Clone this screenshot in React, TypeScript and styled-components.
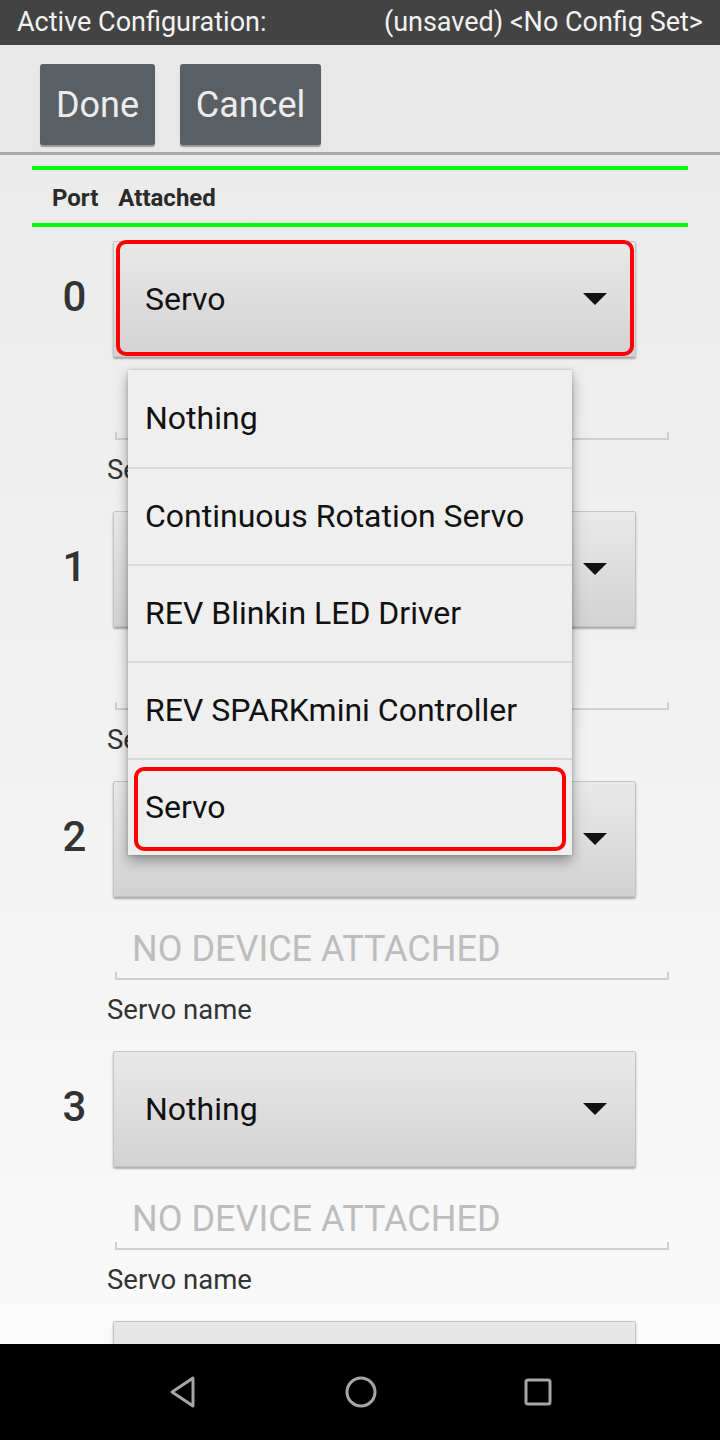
import React from "react";
import styled, { createGlobalStyle } from "styled-components";

const Global = createGlobalStyle`
  html, body { margin: 0; padding: 0; }
  body { font-family: Roboto, "Noto Sans", sans-serif; background: #000; }
  * { box-sizing: border-box; }
`;

const Page = styled.div`
  width: 720px;
  height: 1440px;
  display: flex;
  flex-direction: column;
  overflow: hidden;
`;

const TopBar = styled.div`
  height: 45px;
  flex: none;
  background: #434343;
  color: #f2f2f2;
  font-size: 27px;
  display: flex;
  align-items: center;
  justify-content: space-between;
  padding: 0 17px 2px 17px;
`;

const Toolbar = styled.div`
  height: 107px;
  flex: none;
  background: #e8e8e8;
  display: flex;
  gap: 25px;
  padding: 19px 0 0 40px;
  align-items: flex-start;
`;

const ToolButton = styled.button<{ $w: number }>`
  width: ${(p) => p.$w}px;
  height: 81px;
  border: none;
  border-radius: 3px;
  background: #5a5f64;
  box-shadow: 0 2px 1px rgba(0, 0, 0, 0.35);
  color: #ececec;
  font-family: Roboto, sans-serif;
  font-size: 36px;
  padding: 0;
`;

const Rule = styled.div`
  height: 3px;
  flex: none;
  background: #a9a9a9;
`;

const Content = styled.div`
  flex: 1;
  position: relative;
  overflow: hidden;
  background: linear-gradient(#ebebeb 0%, #f2f2f2 50%, #fafafa 100%);
  padding: 11px 32px 0 32px;
`;

const GreenLine = styled.div`
  height: 4px;
  background: #00ff00;
`;

const HeaderRow = styled.div`
  height: 53px;
  display: flex;
  align-items: center;
  gap: 20px;
  padding: 2px 0 0 20px;
  font-size: 24px;
  font-weight: 700;
  color: #2a2a2a;
`;

const Rows = styled.div`
  display: flex;
  flex-direction: column;
  gap: 27px;
  margin: 14px 0 0 -32px;
`;

const Row = styled.div`
  display: grid;
  grid-template-columns: 113px 1fr;
`;

const PortNum = styled.div`
  height: 116px;
  display: flex;
  align-items: center;
  justify-content: center;
  padding: 0 0 6px 36px;
  font-size: 42px;
  font-weight: 500;
  color: #333;
`;

const Body = styled.div`
  display: flex;
  flex-direction: column;
`;

const Spinner = styled.div<{ $selected?: boolean }>`
  position: relative;
  width: 523px;
  height: 116px;
  border: 1px solid #c4c4c4;
  border-radius: 2px;
  background: linear-gradient(#e9e9e9, #d2d2d2);
  box-shadow: 0 2px 2px rgba(0, 0, 0, 0.3);
  display: flex;
  align-items: center;
  justify-content: space-between;
  padding: 0 28px 0 31px;
  font-size: 32px;
  color: #111;
  &::after {
    content: "";
    display: ${(p) => (p.$selected ? "block" : "none")};
    position: absolute;
    top: -2px;
    left: 2px;
    right: 1px;
    bottom: 0px;
    border: 4px solid #ff0000;
    border-radius: 10px;
  }
`;

const Arrow = styled.div`
  width: 0;
  height: 0;
  border-left: 12px solid transparent;
  border-right: 12px solid transparent;
  border-top: 12px solid #111;
`;

const FieldText = styled.div`
  margin: 33px 0 0 2px;
  padding: 0 0 4px 17px;
  font-size: 36px;
  line-height: 38px;
  color: #bdbdbd;
`;

const Underline = styled.div`
  margin-left: 2px;
  width: 554px;
  height: 8px;
  border: 2px solid #cfcfcf;
  border-top: none;
`;

const FieldLabel = styled.div`
  margin: 16px 0 0 -6px;
  font-size: 27.5px;
  line-height: 28px;
  color: #333;
`;

const Popup = styled.div`
  position: absolute;
  left: 128px;
  top: 215px;
  width: 444px;
  background: #efefef;
  box-shadow: 0 6px 12px rgba(0, 0, 0, 0.35), 0 0 3px rgba(0, 0, 0, 0.2);
  display: flex;
  flex-direction: column;
`;

const PopupItem = styled.div<{ $highlight?: boolean }>`
  position: relative;
  height: 97px;
  display: flex;
  align-items: center;
  padding: 0 0 2px 17px;
  font-size: 32px;
  color: #111;
  & + & {
    border-top: 2px solid #d9d9d9;
  }
  &::after {
    content: "";
    display: ${(p) => (p.$highlight ? "block" : "none")};
    position: absolute;
    top: 7px;
    left: 6px;
    right: 6px;
    bottom: 4px;
    border: 4px solid #ff0000;
    border-radius: 10px;
  }
`;

const NavBar = styled.div`
  height: 96px;
  flex: none;
  background: #000;
  display: flex;
  align-items: center;
  justify-content: center;
  gap: 145px;
  padding-right: 0px;
`;

const ports = [
  { n: 0, value: "Servo", selected: true },
  { n: 1, value: "", selected: false },
  { n: 2, value: "", selected: false },
  { n: 3, value: "Nothing", selected: false },
  { n: 4, value: "", selected: false },
];

const options = [
  "Nothing",
  "Continuous Rotation Servo",
  "REV Blinkin LED Driver",
  "REV SPARKmini Controller",
  "Servo",
];

export default function App() {
  return (
    <Page>
      <Global />
      <TopBar>
        <span>Active Configuration:</span>
        <span>(unsaved) &lt;No Config Set&gt;</span>
      </TopBar>
      <Toolbar>
        <ToolButton $w={115}>Done</ToolButton>
        <ToolButton $w={141}>Cancel</ToolButton>
      </Toolbar>
      <Rule />
      <Content>
        <GreenLine />
        <HeaderRow>
          <span>Port</span>
          <span>Attached</span>
        </HeaderRow>
        <GreenLine />
        <Rows>
          {ports.map((p) => (
            <Row key={p.n}>
              <PortNum>{p.n < 4 ? p.n : ""}</PortNum>
              <Body>
                <Spinner $selected={p.selected}>
                  <span>{p.value}</span>
                  <Arrow />
                </Spinner>
                <FieldText>NO DEVICE ATTACHED</FieldText>
                <Underline />
                <FieldLabel>Servo name</FieldLabel>
              </Body>
            </Row>
          ))}
        </Rows>
        <Popup>
          {options.map((o, i) => (
            <PopupItem key={o} $highlight={i === options.length - 1}>
              {o}
            </PopupItem>
          ))}
        </Popup>
      </Content>
      <NavBar>
        <svg width="32" height="34" viewBox="0 0 32 34">
          <path d="M26 3 L5 17 L26 31 Z" fill="none" stroke="#a6a6a6" strokeWidth="3" strokeLinejoin="round" />
        </svg>
        <svg width="34" height="34" viewBox="0 0 34 34">
          <circle cx="17" cy="17" r="14" fill="none" stroke="#a6a6a6" strokeWidth="3" />
        </svg>
        <svg width="30" height="30" viewBox="0 0 30 30">
          <rect x="3" y="3" width="24" height="24" rx="2" fill="none" stroke="#a6a6a6" strokeWidth="3" />
        </svg>
      </NavBar>
    </Page>
  );
}
